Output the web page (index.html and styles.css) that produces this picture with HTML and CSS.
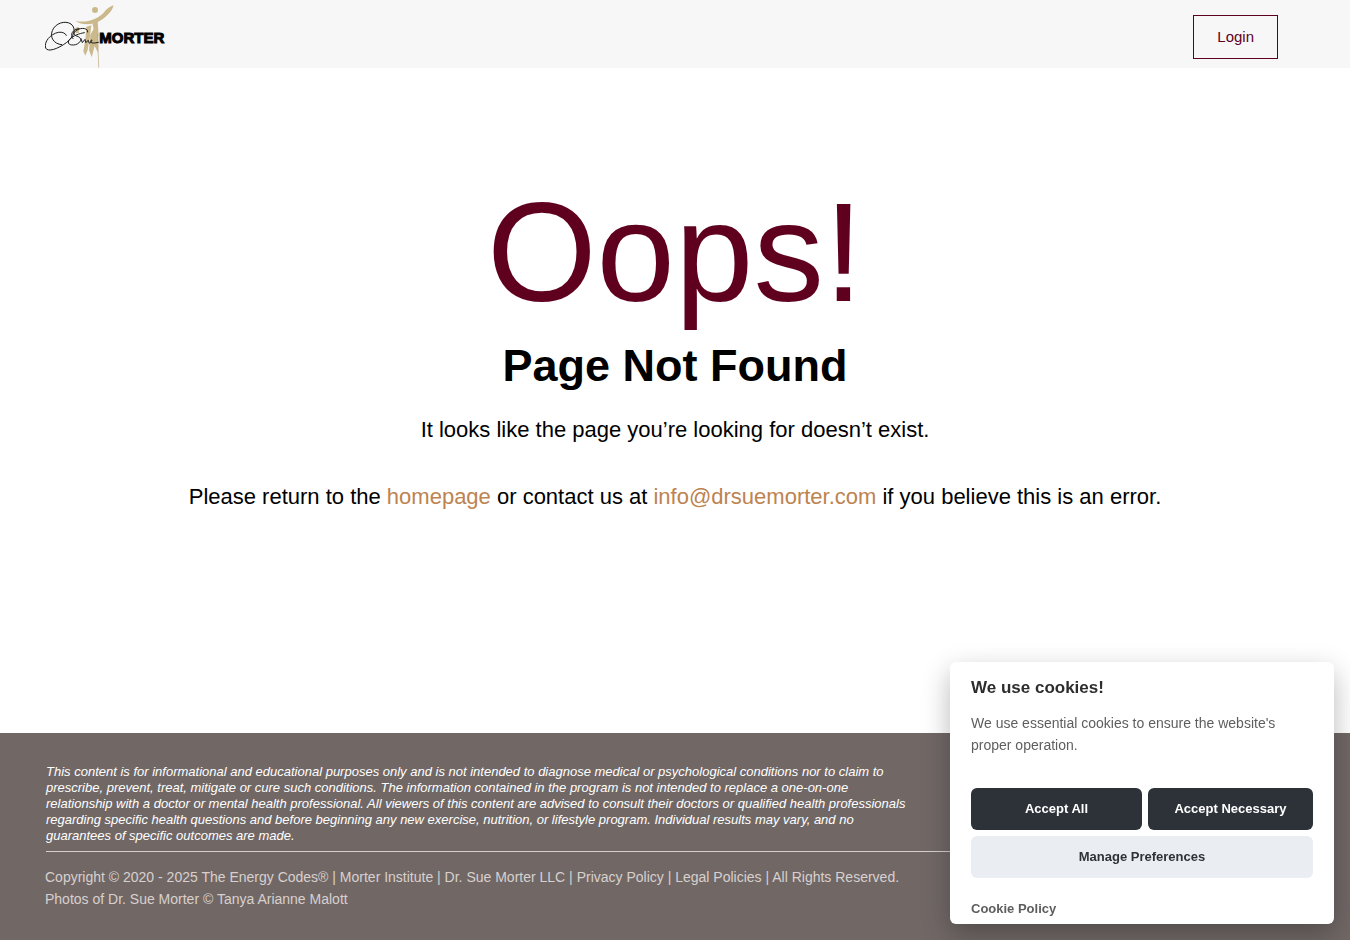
FILE: index.html
```html
<!DOCTYPE html>
<html lang="en">
<head>
    <meta charset="UTF-8">
    <meta name="viewport" content="width=device-width, initial-scale=1.0">
    <title>Page Not Found</title>
    <link rel="stylesheet" href="styles.css">
</head>
<body>
    <header class="header">
        <a class="logo" href="#" aria-label="Dr. Sue Morter">
            <svg width="120" height="68" viewBox="30 0 360 204">
                <!-- figure -->
                <g fill="#cbb98c">
                    <ellipse cx="180" cy="30" rx="9" ry="9"/>
                    <path d="M121 62 C150 70 185 60 206 38 C214 28 222 20 236 16 C232 32 218 48 200 59 C176 75 142 78 121 62 Z"/>
                    <path d="M172 68 L188 64 L191 108 L180 106 Z"/>
                    <path d="M121 84 L131 80 L132 98 L122 100 Z"/>
                    <path d="M154 80 L169 76 L165 108 L158 150 L151 167 L145 154 L151 120 Z"/>
                    <path d="M166 104 L178 84 L190 104 L189 158 L179 138 L170 172 L162 150 Z"/>
                </g>
                <path d="M188 100 L191 203" fill="none" stroke="#b9a77c" stroke-width="2"/>
                <!-- signature -->
                <g fill="none" stroke="#1c1c1c" stroke-width="3" stroke-linecap="round">
                    <path d="M80 134 C56 132 44 112 52 92 C60 70 90 60 108 72 C126 86 116 112 94 128 C70 146 38 158 32 144 C26 126 46 102 70 97 C82 95 92 100 94 106"/>
                    <path d="M158 96 C160 84 140 82 126 90 C112 98 116 106 130 110 C142 116 138 128 122 134 C104 138 94 130 104 118 C112 108 134 100 148 98"/>
                    <path d="M114 116 C104 104 112 88 132 86 M138 116 L142 128 L150 118 L152 128 L160 121 L163 130 C172 124 172 117 168 121 C164 130 174 131 190 127"/>
                </g>
                <text class="logo-text" x="193" y="129">MORTER</text>
            </svg>
        </a>
        <a class="login" href="#">Login</a>
    </header>

    <main class="main">
        <h1>Oops!</h1>
        <h2>Page Not Found</h2>
        <p>It looks like the page you’re looking for doesn’t exist.</p>
        <p>Please return to the <a href="#">homepage</a> or contact us at <a href="mailto:info@drsuemorter.com">info@drsuemorter.com</a> if you believe this is an error.</p>
    </main>

    <footer class="footer">
        <div class="disclaimer">
            <p>This content is for informational and educational purposes only and is not intended to diagnose medical or psychological conditions nor to claim to prescribe, prevent, treat, mitigate or cure such conditions. The information contained in the program is not intended to replace a one-on-one relationship with a doctor or mental health professional. All viewers of this content are advised to consult their doctors or qualified health professionals regarding specific health questions and before beginning any new exercise, nutrition, or lifestyle program. Individual results may vary, and no guarantees of specific outcomes are made.</p>
        </div>
        <div class="copyright">
            <p>Copyright © 2020 - 2025 The Energy Codes® | Morter Institute | Dr. Sue Morter LLC | <a href="#">Privacy Policy</a> | <a href="#">Legal Policies</a> | All Rights Reserved.</p>
            <p>Photos of Dr. Sue Morter © Tanya Arianne Malott</p>
        </div>
    </footer>

    <div class="cookie" role="dialog" aria-labelledby="cookie-title">
        <h3 id="cookie-title">We use cookies!</h3>
        <p>We use essential cookies to ensure the website's proper operation.</p>
        <div class="cookie-buttons">
            <button type="button">Accept All</button>
            <button type="button">Accept Necessary</button>
            <button type="button" class="manage">Manage Preferences</button>
        </div>
        <a class="cookie-policy" href="#">Cookie Policy</a>
    </div>
</body>
</html>
```
FILE: styles.css
```css
* {
    box-sizing: border-box;
}
body {
    font-family: "Liberation Sans", Arial, sans-serif;
    margin: 0;
    display: flex;
    flex-direction: column;
    min-height: 100vh;
    background-color: #fff;
    color: #000;
}
h1, h2, h3, p {
    margin: 0;
}
a {
    text-decoration: none;
}
.header {
    display: flex;
    justify-content: space-between;
    align-items: center;
    padding: 0 72px 0 45px;
    background-color: #f7f7f7;
}
.logo svg {
    display: block;
}
.logo-text {
    font-size: 45px;
    font-weight: bold;
    fill: #000;
    stroke: #000;
    stroke-width: 3px;
}
.login {
    margin-top: 6px;
    padding: 0 23px;
    border: 1px solid #60001f;
    color: #60001f;
    font-size: 15px;
    line-height: 42px;
}
.main {
    flex: 1;
    padding: 102px 20px 0;
    text-align: center;
}
h1 {
    color: #60001f;
    font-size: 141px;
    font-weight: normal;
    line-height: 164px;
}
h2 {
    font-size: 45px;
    line-height: 64px;
}
.main p {
    margin-top: 15px;
    font-size: 22px;
    line-height: 33px;
}
.main p + p {
    margin-top: 34px;
}
.main a {
    color: #bd8350;
}
.footer {
    padding: 31px 45px 30px;
    background-color: #716866;
    color: #fff;
}
.disclaimer {
    margin: 0 1px;
    padding-bottom: 7px;
    border-bottom: 1px solid #d5cfcd;
    font-size: 13px;
    font-style: italic;
    line-height: 16px;
}
.disclaimer p {
    width: 69%;
}
.copyright {
    padding-top: 14px;
    color: #d8d0ce;
    font-size: 14px;
    line-height: 22px;
}
.copyright a {
    color: inherit;
}
.cookie {
    position: fixed;
    right: 16px;
    bottom: 16px;
    width: 384px;
    padding: 14px 21px 5px;
    border-radius: 6px;
    background-color: #fff;
    box-shadow: 0 10px 28px rgba(2, 2, 3, 0.28);
}
.cookie h3 {
    color: #2d2d2d;
    font-size: 17px;
    line-height: 24px;
}
.cookie p {
    margin-top: 12px;
    color: #5e5e5e;
    font-size: 14px;
    line-height: 22px;
}
.cookie-buttons {
    display: grid;
    grid-template-columns: 171fr 165fr;
    gap: 6px;
    margin-top: 32px;
}
.cookie button {
    height: 42px;
    padding: 0 6px 2px;
    border: none;
    border-radius: 6px;
    background-color: #2d3238;
    color: #fff;
    font-family: inherit;
    font-size: 13px;
    font-weight: bold;
    cursor: pointer;
}
.cookie .manage {
    grid-column: span 2;
    background-color: #eaeef2;
    color: #2d3238;
}
.cookie-policy {
    display: block;
    margin-top: 20px;
    color: #5e5e5e;
    font-size: 13px;
    font-weight: bold;
    line-height: 21px;
}
```
